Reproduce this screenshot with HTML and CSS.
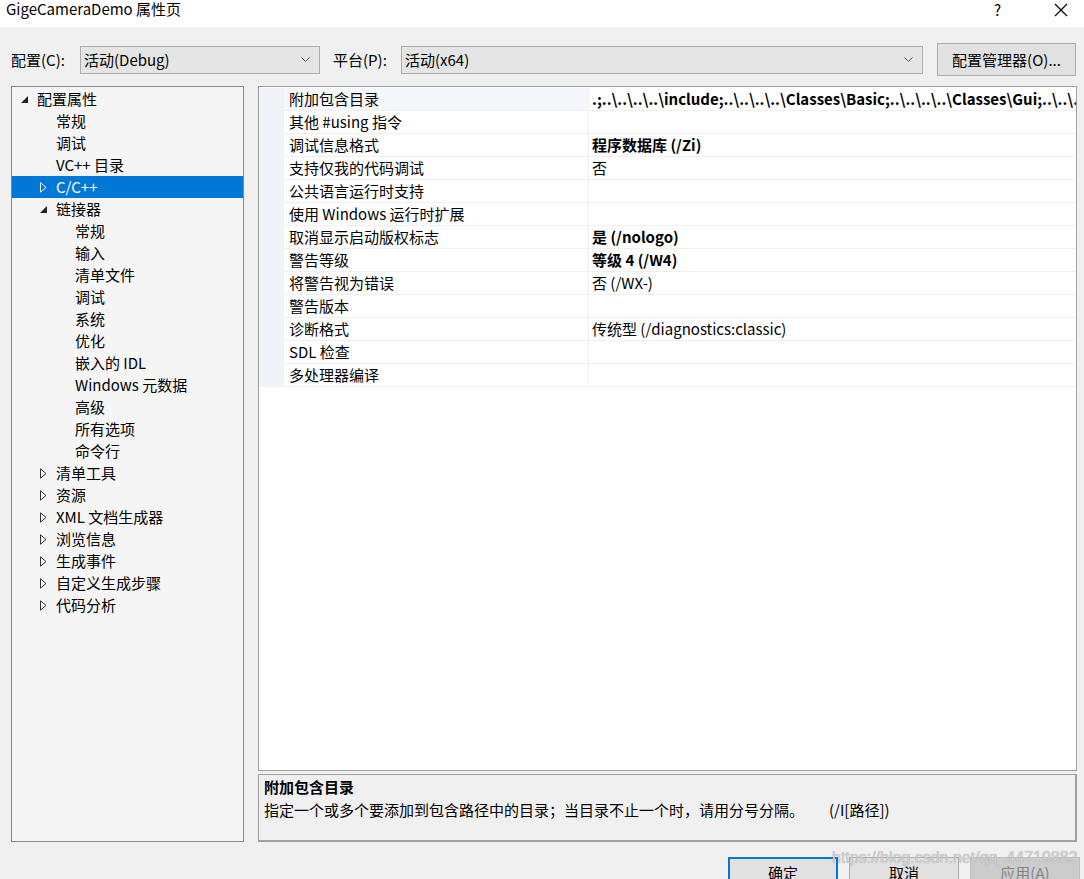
FILE: index.html
```html
<!DOCTYPE html>
<html lang="zh-CN">
<head>
    <meta charset="UTF-8">
    <title>GigeCameraDemo 属性页</title>
    <link rel="stylesheet" href="styles.css">
</head>
<body>
    <div class="titlebar">
        <span class="title">GigeCameraDemo 属性页</span>
        <span class="help">?</span>
        <svg class="close" width="14" height="14" viewBox="0 0 14 14"><path d="M1 1 L13 13 M13 1 L1 13" stroke="#000" stroke-width="1.2" fill="none"/></svg>
    </div>

    <div class="toolbar">
        <span class="lbl lbl1">配置(C):</span>
        <div class="select sel1"><span>活动(Debug)</span><svg width="9" height="6" viewBox="0 0 9 6"><path d="M0.5 0.5 L4.5 4.5 L8.5 0.5" stroke="#555" fill="none"/></svg></div>
        <span class="lbl lbl2">平台(P):</span>
        <div class="select sel2"><span>活动(x64)</span><svg width="9" height="6" viewBox="0 0 9 6"><path d="M0.5 0.5 L4.5 4.5 L8.5 0.5" stroke="#555" fill="none"/></svg></div>
        <div class="btn mgr">配置管理器(O)...</div>
    </div>

    <div class="main">
        <div class="tree">
            <div class="node l0"><span class="arr"><svg width="7" height="7" viewBox="0 0 7 7"><path d="M7 0 L7 7 L0 7 Z" fill="#222"/></svg></span>配置属性</div>
            <div class="node l1"><span class="arr"></span>常规</div>
            <div class="node l1"><span class="arr"></span>调试</div>
            <div class="node l1"><span class="arr"></span>VC++ 目录</div>
            <div class="node l1 sel"><span class="arr"><svg width="7" height="11" viewBox="0 0 7 11"><path d="M0.5 0.8 L6 5.5 L0.5 10.2 Z" stroke="#fff" fill="none"/></svg></span>C/C++</div>
            <div class="node l1"><span class="arr"><svg width="7" height="7" viewBox="0 0 7 7"><path d="M7 0 L7 7 L0 7 Z" fill="#222"/></svg></span>链接器</div>
            <div class="node l2"><span class="arr"></span>常规</div>
            <div class="node l2"><span class="arr"></span>输入</div>
            <div class="node l2"><span class="arr"></span>清单文件</div>
            <div class="node l2"><span class="arr"></span>调试</div>
            <div class="node l2"><span class="arr"></span>系统</div>
            <div class="node l2"><span class="arr"></span>优化</div>
            <div class="node l2"><span class="arr"></span>嵌入的 IDL</div>
            <div class="node l2"><span class="arr"></span>Windows 元数据</div>
            <div class="node l2"><span class="arr"></span>高级</div>
            <div class="node l2"><span class="arr"></span>所有选项</div>
            <div class="node l2"><span class="arr"></span>命令行</div>
            <div class="node l1"><span class="arr"><svg width="7" height="11" viewBox="0 0 7 11"><path d="M0.5 0.8 L6 5.5 L0.5 10.2 Z" stroke="#333" fill="none"/></svg></span>清单工具</div>
            <div class="node l1"><span class="arr"><svg width="7" height="11" viewBox="0 0 7 11"><path d="M0.5 0.8 L6 5.5 L0.5 10.2 Z" stroke="#333" fill="none"/></svg></span>资源</div>
            <div class="node l1"><span class="arr"><svg width="7" height="11" viewBox="0 0 7 11"><path d="M0.5 0.8 L6 5.5 L0.5 10.2 Z" stroke="#333" fill="none"/></svg></span>XML 文档生成器</div>
            <div class="node l1"><span class="arr"><svg width="7" height="11" viewBox="0 0 7 11"><path d="M0.5 0.8 L6 5.5 L0.5 10.2 Z" stroke="#333" fill="none"/></svg></span>浏览信息</div>
            <div class="node l1"><span class="arr"><svg width="7" height="11" viewBox="0 0 7 11"><path d="M0.5 0.8 L6 5.5 L0.5 10.2 Z" stroke="#333" fill="none"/></svg></span>生成事件</div>
            <div class="node l1"><span class="arr"><svg width="7" height="11" viewBox="0 0 7 11"><path d="M0.5 0.8 L6 5.5 L0.5 10.2 Z" stroke="#333" fill="none"/></svg></span>自定义生成步骤</div>
            <div class="node l1"><span class="arr"><svg width="7" height="11" viewBox="0 0 7 11"><path d="M0.5 0.8 L6 5.5 L0.5 10.2 Z" stroke="#333" fill="none"/></svg></span>代码分析</div>
        </div>

        <div class="right">
            <div class="grid">
                <div class="prow first"><div class="gut"></div><div class="pname">附加包含目录</div><div class="pval b">.;..\..\..\..\include;..\..\..\..\Classes\Basic;..\..\..\..\Classes\Gui;..\..\..\..\Classes\Io</div></div>
                <div class="prow"><div class="gut"></div><div class="pname">其他 #using 指令</div><div class="pval"></div></div>
                <div class="prow"><div class="gut"></div><div class="pname">调试信息格式</div><div class="pval b">程序数据库 (/Zi)</div></div>
                <div class="prow"><div class="gut"></div><div class="pname">支持仅我的代码调试</div><div class="pval">否</div></div>
                <div class="prow"><div class="gut"></div><div class="pname">公共语言运行时支持</div><div class="pval"></div></div>
                <div class="prow"><div class="gut"></div><div class="pname">使用 Windows 运行时扩展</div><div class="pval"></div></div>
                <div class="prow"><div class="gut"></div><div class="pname">取消显示启动版权标志</div><div class="pval b">是 (/nologo)</div></div>
                <div class="prow"><div class="gut"></div><div class="pname">警告等级</div><div class="pval b">等级 4 (/W4)</div></div>
                <div class="prow"><div class="gut"></div><div class="pname">将警告视为错误</div><div class="pval">否 (/WX-)</div></div>
                <div class="prow"><div class="gut"></div><div class="pname">警告版本</div><div class="pval"></div></div>
                <div class="prow"><div class="gut"></div><div class="pname">诊断格式</div><div class="pval">传统型 (/diagnostics:classic)</div></div>
                <div class="prow"><div class="gut"></div><div class="pname">SDL 检查</div><div class="pval"></div></div>
                <div class="prow"><div class="gut"></div><div class="pname">多处理器编译</div><div class="pval"></div></div>
            </div>
            <div class="desc">
                <div class="desc-title">附加包含目录</div>
                <div class="desc-text">指定一个或多个要添加到包含路径中的目录；当目录不止一个时，请用分号分隔。<span class="sw">(/I[路径])</span></div>
            </div>
        </div>
    </div>

    <div class="buttons">
        <div class="btn ok">确定</div>
        <div class="btn">取消</div>
        <div class="btn off">应用(A)</div>
    </div>

    <div class="mark">https://blog.csdn.net/qq_44719882</div>
</body>
</html>
```

FILE: styles.css
```css
body { margin: 0; width: 1084px; height: 879px; overflow: hidden; position: relative; background: #f0f0f0; color: #000; font-family: "Noto Sans CJK SC", "Noto Sans", sans-serif; font-size: 15px; }

.titlebar { height: 27px; background: #fff; display: flex; align-items: center; }
.title { margin-left: 6px; flex: 1; line-height: 20px; margin-top: -9px; }
.help { width: 14px; margin-right: 46px; margin-top: -8px; font-size: 15px; }
.close { margin-right: 16px; margin-top: -8px; }

.toolbar { display: flex; align-items: center; height: 33px; margin-top: 16px; padding-left: 11px; }
.lbl { line-height: 20px; }
.lbl1 { width: 69px; }
.lbl2 { width: 68px; margin-left: 13px; }
.select { background: #e5e5e5; border: 1px solid #adadad; display: flex; align-items: center; justify-content: space-between; padding: 0 9px 0 3px; box-sizing: border-box; height: 28px; }
.sel1 { width: 240px; }
.sel2 { width: 522px; }
.btn { background: #e1e1e1; border: 1px solid #adadad; display: flex; align-items: center; justify-content: center; box-sizing: border-box; }
.mgr { width: 139px; height: 33px; margin-left: 14px; }

.main { display: flex; gap: 14px; margin-top: 10px; padding-left: 11px; }
.tree { width: 233px; height: 756px; box-sizing: border-box; border: 1px solid #828790; background: #f5f5f5; padding-top: 1px; }
.node { height: 22px; line-height: 22px; display: flex; align-items: center; white-space: nowrap; }
.node.l0 { padding-left: 9px; }
.node.l1 { padding-left: 28px; }
.node.l2 { padding-left: 47px; }
.arr { width: 16px; display: flex; align-items: center; }
.node.sel { background: #0078d7; color: #fff; }

.right { width: 819px; display: flex; flex-direction: column; }
.grid { height: 685px; box-sizing: border-box; border: 1px solid #a0a0a0; background: #fff; padding-top: 1px; }
.prow { display: grid; grid-template-columns: 25px 305px 1fr; height: 23px; }
.gut { background: #f0f4f9; }
.pname, .pval { line-height: 22px; border-bottom: 1px solid #f0f0f0; white-space: nowrap; overflow: hidden; }
.pname { padding-left: 5px; border-right: 1px solid #f0f0f0; }
.pval { padding-left: 3px; }
.first .pname { background: #f4f7fb; }
.b { font-weight: bold; }

.desc { margin-top: 3px; height: 68px; box-sizing: border-box; border: 1px solid #a0a0a0; border-right-width: 2px; border-bottom-width: 2px; padding: 2px 0 0 5px; }
.desc-title { font-weight: bold; line-height: 20px; }
.desc-text { line-height: 20px; margin-top: 3px; }
.sw { margin-left: 25px; }

.buttons { display: flex; justify-content: flex-end; gap: 11px; padding-right: 4px; margin-top: 15px; }
.buttons .btn { width: 110px; height: 30px; }
.buttons .ok { border: 2px solid #0078d7; }
.buttons .off { background: #cccccc; border-color: #bfbfbf; color: #838383; }

.mark { position: absolute; left: 832px; top: 849px; font-family: "Liberation Sans", sans-serif; font-size: 16px; color: rgba(215, 215, 215, 0.9); text-shadow: 0 0 1px #9a9a9a; }
```
